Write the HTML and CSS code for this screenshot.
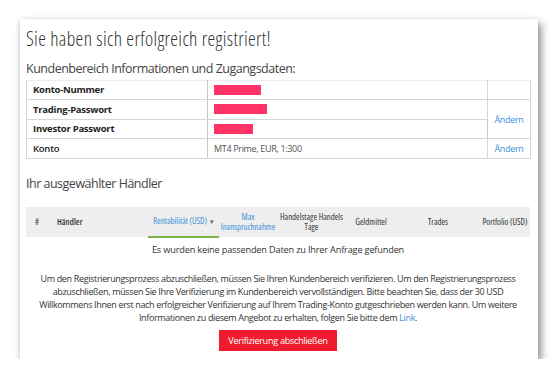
FILE: index.html
```html
<!DOCTYPE html>
<html lang="de">
<head>
    <meta charset="UTF-8">
    <title>Registrierung</title>
    <link rel="stylesheet" href="styles.css">
</head>
<body>
    <section class="panel">
        <h1 class="title">Sie haben sich erfolgreich registriert!</h1>
        <h2 class="subtitle">Kundenbereich Informationen und Zugangsdaten:</h2>
        <table class="access">
            <colgroup>
                <col class="c-label">
                <col class="c-value">
                <col class="c-action">
            </colgroup>
            <tr class="first">
                <th>Konto-Nummer</th>
                <td><span class="mask mask-1"></span></td>
                <td></td>
            </tr>
            <tr>
                <th>Trading-Passwort</th>
                <td><span class="mask mask-2"></span></td>
                <td rowspan="2" class="action"><a href="#">Ändern</a></td>
            </tr>
            <tr>
                <th>Investor Passwort</th>
                <td><span class="mask mask-3"></span></td>
            </tr>
            <tr>
                <th class="plain">Konto</th>
                <td class="muted">MT4 Prime, EUR, 1:300</td>
                <td class="action"><a href="#">Ändern</a></td>
            </tr>
        </table>

        <h2 class="subtitle trader-title">Ihr ausgewählter Händler</h2>
        <table class="traders">
            <colgroup>
                <col class="t-num">
                <col class="t-name">
                <col class="t-rent">
                <col class="t-max">
                <col class="t-days">
                <col class="t-funds">
                <col class="t-trades">
                <col class="t-folio">
            </colgroup>
            <thead>
                <tr>
                    <th>#</th>
                    <th class="left">Händler</th>
                    <th class="link sorted">Rentabilität (USD) <span class="caret">&#9662;</span></th>
                    <th class="link">Max Inanspruchnahme</th>
                    <th>Handelstage Handels Tage</th>
                    <th>Geldmittel</th>
                    <th>Trades</th>
                    <th>Portfolio (USD)</th>
                </tr>
            </thead>
            <tbody>
                <tr>
                    <td colspan="8" class="empty">Es wurden keine passenden Daten zu Ihrer Anfrage gefunden</td>
                </tr>
            </tbody>
        </table>

        <p class="notice">Um den Registrierungsprozess abzuschließen, müssen Sie Ihren Kundenbereich verifizieren. Um den Registrierungsprozess<br>
            abzuschließen, müssen Sie Ihre Verifizierung im Kundenbereich vervollständigen. Bitte beachten Sie, dass der 30 USD<br>
            Willkommens Ihnen erst nach erfolgreicher Verifizierung auf Ihrem Trading-Konto gutgeschrieben werden kann. Um weitere<br>
            Informationen zu diesem Angebot zu erhalten, folgen Sie bitte dem <a href="#">Link</a>.</p>
        <div class="actions">
            <a class="button" href="#">Verifizierung abschließen</a>
        </div>
    </section>
</body>
</html>
```

FILE: styles.css
```css
* {
    margin: 0;
    padding: 0;
    box-sizing: border-box;
}
body {
    background: #fff;
    font-family: "Open Sans", "Noto Sans", sans-serif;
    color: #333;
}
.panel {
    width: 518px;
    height: 340px;
    margin: 19px 0 0 20px;
    padding: 8.5px 8px 0 6px;
    background: #fff;
    box-shadow: 3px 4px 8px rgba(0, 0, 0, 0.45), -1px 0 4px rgba(0, 0, 0, 0.08);
}
.title {
    font-size: 19.5px;
    font-stretch: 75%;
    font-weight: 300;
    letter-spacing: 0.35px;
    line-height: 22px;
    color: #333;
}
.subtitle {
    font-size: 12.5px;
    letter-spacing: -0.5px;
    font-weight: 400;
    line-height: 18px;
    color: #444;
    margin-top: 10px;
}
/* tableau des accès */
.access {
    width: 504px;
    border-collapse: collapse;
    table-layout: fixed;
    font-size: 9px;
    letter-spacing: -0.33px;
    margin-top: 2px;
    border: 1px solid #c8c8c8;
}
.c-label { width: 181px; }
.c-value { width: 280px; }
.c-action { width: 43px; }
.access th, .access td {
    height: 19.5px;
    padding: 0 6px;
    text-align: left;
    border: 1px solid #d6d6d6;
}
.access tr.first th, .access tr.first td {
    border-top-color: #ececec;
}
.access th {
    font-size: 9.5px;
    letter-spacing: -0.25px;
    font-weight: 700;
    color: #222;
    border-right-color: #c8c8c8;
}
.access th.plain {
    font-weight: 600;
}
.access .muted {
    color: #555;
}
.access td.action {
    text-align: center;
    padding: 0;
    border-left-color: #c8c8c8;
}
.access td:last-child {
    border-left-color: #c8c8c8;
}
.access a, .traders .link, .notice a {
    color: #3d8fd8;
    text-decoration: none;
}
.mask {
    display: block;
    height: 10px;
    background: #ff3366;
}
.mask-1 { width: 47px; }
.mask-2 { width: 53px; }
.mask-3 { width: 39px; }
/* tableau des traders */
.trader-title {
    margin-top: 16px;
}
.traders {
    width: 504px;
    border-collapse: collapse;
    table-layout: fixed;
    margin-top: 14px;
}
.t-num { width: 22px; }
.t-name { width: 100px; }
.t-rent { width: 71px; }
.t-max { width: 58px; }
.t-days { width: 69px; }
.t-funds { width: 50px; }
.t-trades { width: 84px; }
.t-folio { width: 50px; }
.traders thead th {
    background: #eee;
    height: 30px;
    font-size: 8.7px;
    font-stretch: 75%;
    font-weight: 400;
    line-height: 10px;
    color: #333;
    text-align: center;
    padding: 0;
}
.traders thead th.left {
    text-align: left;
    padding-left: 9px;
    font-weight: 600;
}
.traders thead th.link {
    color: #3d8fd8;
}
.traders thead th.sorted {
    border-bottom: 2px solid #7cb342;
    white-space: nowrap;
}
.caret {
    font-size: 7px;
    color: #666;
    margin-left: 1px;
}
.empty {
    text-align: center;
    font-size: 9.2px;
    letter-spacing: -0.18px;
    color: #333;
    height: 25px;
}
/* texte final et bouton */
.notice {
    font-size: 9px;
    letter-spacing: -0.35px;
    line-height: 13px;
    text-align: center;
    color: #333;
    margin-top: 10px;
    white-space: nowrap;
}
.actions {
    display: flex;
    justify-content: center;
    margin-top: 6px;
}
.button {
    display: block;
    width: 118px;
    height: 21px;
    line-height: 21px;
    text-align: center;
    background: #ee1c2e;
    color: #fff;
    font-size: 9.2px;
    letter-spacing: -0.34px;
    text-decoration: none;
}
```
